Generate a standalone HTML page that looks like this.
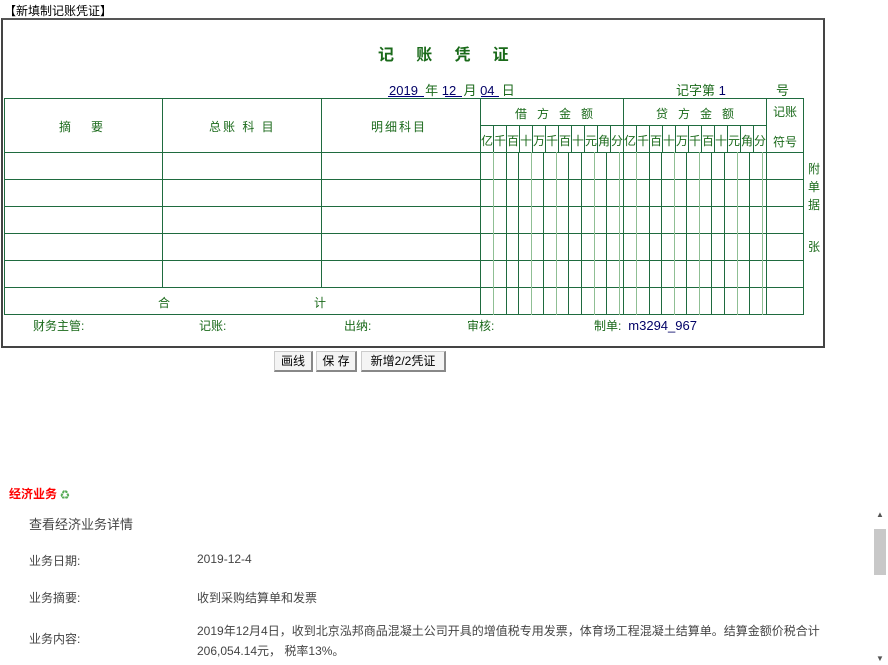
<!DOCTYPE html>
<html><head><meta charset="utf-8"><style>
body{margin:0;width:888px;height:665px;overflow:hidden;background:#fff;font-family:"Liberation Sans","Noto Sans CJK SC",sans-serif;position:relative}
.t{position:absolute;white-space:nowrap;font-size:12px;color:#1b6a1b}
.btn{position:absolute;top:351px;height:18px;border:1px solid #ccc;border-right:2px solid #888;border-bottom:2px solid #888;background:#f4f4f4;font-size:12px;line-height:18px;text-align:center;color:#000}
.g{color:#444;font-size:12px}
</style></head><body>
<div class="t" style="left:4px;top:2px;color:#000">【新填制记账凭证】</div>
<div style="position:absolute;left:1px;top:18px;width:820px;height:326px;border:2px solid #444;border-top-color:#555"></div>
<svg style="position:absolute;left:0;top:0" width="888" height="665">
<g stroke="#1f6b3f" stroke-width="1" fill="none" shape-rendering="crispEdges">
<line x1="4" y1="98.5" x2="804" y2="98.5"/>
<line x1="480" y1="125.5" x2="766" y2="125.5"/>
<line x1="4" y1="152.5" x2="804" y2="152.5"/>
<line x1="4" y1="179.5" x2="804" y2="179.5"/>
<line x1="4" y1="206.5" x2="804" y2="206.5"/>
<line x1="4" y1="233.5" x2="804" y2="233.5"/>
<line x1="4" y1="260.5" x2="804" y2="260.5"/>
<line x1="4" y1="287.5" x2="804" y2="287.5"/>
<line x1="4" y1="314.5" x2="804" y2="314.5"/>
<line x1="4.5" y1="98" x2="4.5" y2="315"/>
<line x1="162.5" y1="98" x2="162.5" y2="287"/>
<line x1="321.5" y1="98" x2="321.5" y2="287"/>
<line x1="480.5" y1="98" x2="480.5" y2="315"/>
<line x1="623.5" y1="98" x2="623.5" y2="315"/>
<line x1="766.5" y1="98" x2="766.5" y2="315"/>
<line x1="803.5" y1="98" x2="803.5" y2="315"/>
<g>
<line x1="493.5" y1="125" x2="493.5" y2="152"/><line x1="506.5" y1="125" x2="506.5" y2="152"/><line x1="519.5" y1="125" x2="519.5" y2="152"/><line x1="532.5" y1="125" x2="532.5" y2="152"/><line x1="545.5" y1="125" x2="545.5" y2="152"/><line x1="558.5" y1="125" x2="558.5" y2="152"/><line x1="571.5" y1="125" x2="571.5" y2="152"/><line x1="584.5" y1="125" x2="584.5" y2="152"/><line x1="597.5" y1="125" x2="597.5" y2="152"/><line x1="610.5" y1="125" x2="610.5" y2="152"/>
<line x1="636.5" y1="125" x2="636.5" y2="152"/><line x1="649.5" y1="125" x2="649.5" y2="152"/><line x1="662.5" y1="125" x2="662.5" y2="152"/><line x1="675.5" y1="125" x2="675.5" y2="152"/><line x1="688.5" y1="125" x2="688.5" y2="152"/><line x1="701.5" y1="125" x2="701.5" y2="152"/><line x1="714.5" y1="125" x2="714.5" y2="152"/><line x1="727.5" y1="125" x2="727.5" y2="152"/><line x1="740.5" y1="125" x2="740.5" y2="152"/><line x1="753.5" y1="125" x2="753.5" y2="152"/>
</g>
<g>
<line x1="506.5" y1="152" x2="506.5" y2="315"/><line x1="518.5" y1="152" x2="518.5" y2="315"/><line x1="543.5" y1="152" x2="543.5" y2="315"/><line x1="568.5" y1="152" x2="568.5" y2="315"/><line x1="581.5" y1="152" x2="581.5" y2="315"/><line x1="606.5" y1="152" x2="606.5" y2="315"/>
<line x1="649.5" y1="152" x2="649.5" y2="315"/><line x1="661.5" y1="152" x2="661.5" y2="315"/><line x1="686.5" y1="152" x2="686.5" y2="315"/><line x1="711.5" y1="152" x2="711.5" y2="315"/><line x1="724.5" y1="152" x2="724.5" y2="315"/><line x1="749.5" y1="152" x2="749.5" y2="315"/>
</g>
<g stroke="#8fbf94">
<line x1="493.5" y1="152" x2="493.5" y2="315"/><line x1="531.5" y1="152" x2="531.5" y2="315"/><line x1="556.5" y1="152" x2="556.5" y2="315"/><line x1="594.5" y1="152" x2="594.5" y2="315"/><line x1="619.5" y1="152" x2="619.5" y2="315"/>
<line x1="636.5" y1="152" x2="636.5" y2="315"/><line x1="674.5" y1="152" x2="674.5" y2="315"/><line x1="699.5" y1="152" x2="699.5" y2="315"/><line x1="737.5" y1="152" x2="737.5" y2="315"/><line x1="762.5" y1="152" x2="762.5" y2="315"/>
</g>
</g>
<g stroke="#000080" stroke-width="1" shape-rendering="crispEdges">
<line x1="388" y1="96.5" x2="424" y2="96.5"/><line x1="445" y1="96.5" x2="462" y2="96.5"/><line x1="481" y1="96.5" x2="499" y2="96.5"/>
</g>
</svg>
<div class="t" style="left:378px;top:41px;font-size:16px;font-weight:bold;color:#1a6a1a">记&nbsp;&nbsp;&nbsp;&nbsp;&nbsp;账&nbsp;&nbsp;&nbsp;&nbsp;&nbsp;凭&nbsp;&nbsp;&nbsp;&nbsp;&nbsp;证</div>
<div class="t" style="left:389px;top:80px;font-size:13px"><span style="color:#000066">2019</span>&nbsp; 年 <span style="color:#000066">12</span>&nbsp; 月 <span style="color:#000066">04</span>&nbsp; 日</div>
<div class="t" style="left:676px;top:80px;font-size:13px">记字第 <span style="color:#000066">1</span></div>
<div class="t" style="left:776px;top:80px;font-size:13px">号</div>
<div class="t" style="left:59px;top:118px">摘&nbsp;&nbsp;&nbsp;&nbsp;&nbsp;&nbsp;要</div>
<div class="t" style="left:209px;top:118px;letter-spacing:2px">总账 科 目</div>
<div class="t" style="left:371px;top:118px;letter-spacing:2px">明细科目</div>
<div class="t" style="left:515px;top:105px">借&nbsp;&nbsp;&nbsp;方&nbsp;&nbsp;&nbsp;金&nbsp;&nbsp;&nbsp;额</div>
<div class="t" style="left:656px;top:105px">贷&nbsp;&nbsp;&nbsp;方&nbsp;&nbsp;&nbsp;金&nbsp;&nbsp;&nbsp;额</div>
<div class="t" style="left:773px;top:103px">记账</div>
<div class="t" style="left:773px;top:133px">符号</div>
<div class="t" style="left:481px;top:132px;font-size:12px;letter-spacing:1px">亿千百十万千百十元角分</div>
<div class="t" style="left:624px;top:132px;font-size:12px;letter-spacing:1px">亿千百十万千百十元角分</div>
<div class="t" style="left:808px;top:160px;line-height:18px">附<br>单<br>据</div>
<div class="t" style="left:808px;top:238px">张</div>
<div class="t" style="left:158px;top:294px">合</div>
<div class="t" style="left:314px;top:294px">计</div>
<div class="t" style="left:33px;top:317px">财务主管:</div>
<div class="t" style="left:199px;top:317px">记账:</div>
<div class="t" style="left:344px;top:317px">出纳:</div>
<div class="t" style="left:467px;top:317px">审核:</div>
<div class="t" style="left:594px;top:317px">制单: <span style="color:#000066;font-size:13px">&nbsp;m3294_967</span></div>
<div class="btn" style="left:274px;width:36px">画线</div>
<div class="btn" style="left:316px;width:38px">保 存</div>
<div class="btn" style="left:361px;width:82px">新增2/2凭证</div>
<div class="t" style="left:9px;top:485px;color:#f00;font-weight:bold">经济业务 <span style="color:#5a5;font-size:9px">♻</span></div>
<div class="t g" style="left:29px;top:514px;font-size:13px">查看经济业务详情</div>
<div class="t g" style="left:29px;top:552px">业务日期:</div>
<div class="t g" style="left:197px;top:552px">2019-12-4</div>
<div class="t g" style="left:29px;top:589px">业务摘要:</div>
<div class="t g" style="left:197px;top:589px">收到采购结算单和发票</div>
<div class="t g" style="left:29px;top:630px">业务内容:</div>
<div class="t g" style="left:197px;top:621px;line-height:20px">2019年12月4日，收到北京泓邦商品混凝土公司开具的增值税专用发票，体育场工程混凝土结算单。结算金额价税合计<br>206,054.14元， 税率13%。</div>
<div style="position:absolute;left:872px;top:510px;width:16px;height:155px;background:#fff"></div>
<div style="position:absolute;left:874px;top:529px;width:12px;height:46px;background:#c8c8c8"></div>
<div class="t" style="left:876px;top:510px;font-size:8px;color:#555">▲</div>
<div class="t" style="left:876px;top:654px;font-size:8px;color:#555">▼</div>
</body></html>
